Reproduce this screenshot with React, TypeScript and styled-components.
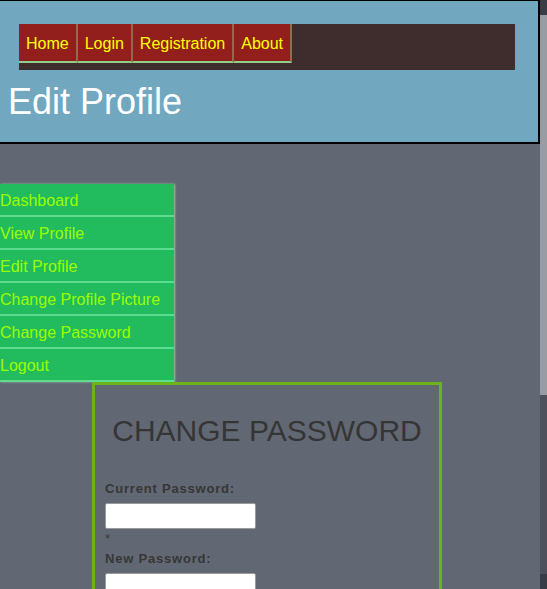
import React from "react";
import styled, { createGlobalStyle } from "styled-components";

const Global = createGlobalStyle`
  html { background: #626873; }
  body {
    margin: 0;
    padding-right: 7px;
    background: #626873;
    font-family: "Liberation Sans", Arial, sans-serif;
  }
`;

const ScrollRail = styled.div`
  position: fixed;
  top: 0;
  right: 0;
  width: 7px;
  height: 100vh;
  display: flex;
  flex-direction: column;
  background: #4e515b;
`;

const ScrollButton = styled.div`
  height: 15px;
  background: #393c44;
  flex: none;
`;

const ScrollThumb = styled.div`
  height: 380px;
  background: #9a9ca3;
  flex: none;
`;

const ScrollTrack = styled.div`
  flex: 1;
`;

const Header = styled.header`
  box-sizing: border-box;
  width: 100%;
  background: #72a7c0;
  border-top: 1px solid #000;
  border-right: 2px solid #000;
  border-bottom: 2px solid #000;
  padding-top: 23px;
`;

const NavBar = styled.nav`
  display: flex;
  margin: 0 23px 0 19px;
  background: #3f2c2d;
  padding-bottom: 7px;
`;

const NavItem = styled.a`
  display: block;
  background: #931f1c;
  color: #ffff00;
  font-size: 16px;
  line-height: 18px;
  padding: 11px 7px 8px;
  border-right: 2px solid rgba(150, 180, 130, 0.5);
  border-bottom: 2px solid #8fcf8a;
  text-decoration: none;
  cursor: pointer;
`;

const Title = styled.h1`
  margin: 11px 0 0 8px;
  padding-bottom: 20px;
  color: #ffffff;
  font-size: 36px;
  font-weight: normal;
  line-height: 41px;
`;

const Main = styled.main`
  padding-top: 40px;
  padding-bottom: 60px;
`;

const Sidebar = styled.ul`
  list-style: none;
  margin: 0;
  padding: 0;
  width: 174px;
  background: #22bb5e;
  box-shadow: 1px 0 2px rgba(170, 240, 190, 0.7);
`;

const SideItem = styled.li`
  box-sizing: border-box;
  height: 33px;
  padding-top: 8px;
  color: #9cff00;
  font-size: 16px;
  line-height: 18px;
  border-bottom: 2px solid #5fdb90;
  cursor: pointer;
`;

const FormBox = styled.section`
  box-sizing: border-box;
  margin-left: 92px;
  width: 350px;
  border: 3px solid #6cb41c;
  padding: 0 10px 40px;
`;

const Heading = styled.h2`
  margin: 29px 0 33px;
  color: #353535;
  font-size: 30px;
  font-weight: normal;
  line-height: 34px;
  text-align: center;
`;

const Label = styled.label`
  display: block;
  color: #363636;
  font-size: 13px;
  font-weight: bold;
  letter-spacing: 0.8px;
  line-height: 15px;
  margin-bottom: 7px;
`;

const Input = styled.input`
  box-sizing: border-box;
  display: block;
  width: 151px;
  height: 26px;
  margin: 0;
  border: 1px solid #9a9a9a;
  border-radius: 2px;
  background: #ffffff;
`;

const Required = styled.div`
  color: #3a3a3a;
  font-size: 13px;
  line-height: 12px;
  margin: 4px 0 6px;
`;

const Button = styled.button`
  margin-top: 10px;
  padding: 4px 12px;
  font-family: "Liberation Sans", Arial, sans-serif;
  font-size: 13px;
  background: #e9e9e9;
  border: 1px solid #888;
`;

const navItems = ["Home", "Login", "Registration", "About"];
const sideItems = [
  "Dashboard",
  "View Profile",
  "Edit Profile",
  "Change Profile Picture",
  "Change Password",
  "Logout",
];
const fields = ["Current Password:", "New Password:", "Confirm Password:"];

export default function App() {
  return (
    <>
      <Global />
      <Header>
        <NavBar>
          {navItems.map((n) => (
            <NavItem key={n}>{n}</NavItem>
          ))}
        </NavBar>
        <Title>Edit Profile</Title>
      </Header>
      <Main>
        <Sidebar>
          {sideItems.map((s) => (
            <SideItem key={s}>{s}</SideItem>
          ))}
        </Sidebar>
        <FormBox>
          <Heading>CHANGE PASSWORD</Heading>
          {fields.map((f) => (
            <div key={f}>
              <Label>{f}</Label>
              <Input type="password" />
              <Required>*</Required>
            </div>
          ))}
          <Button>Change Password</Button>
        </FormBox>
      </Main>
      <ScrollRail>
        <ScrollButton />
        <ScrollThumb />
        <ScrollTrack />
        <ScrollButton />
      </ScrollRail>
    </>
  );
}
